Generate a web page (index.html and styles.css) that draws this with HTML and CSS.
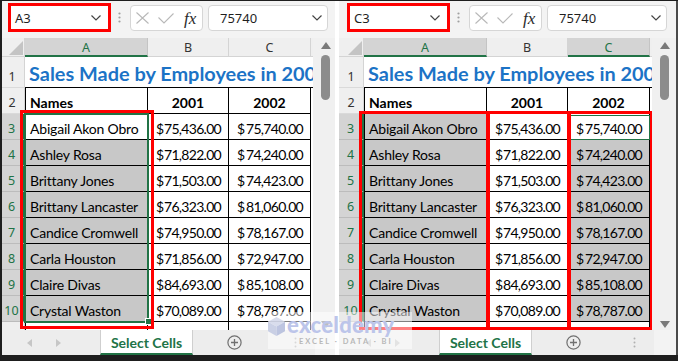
FILE: index.html
```html
<!DOCTYPE html>
<html>
<head>
<meta charset="utf-8">
<link rel="stylesheet" href="styles.css">
</head>
<body>
<div class="screen">
  <div class="panels">
    <div class="clip">
      <section class="panel">
        <div class="toolbar">
          <div class="namebox"><span>A3</span><svg class="chev" width="10" height="6" viewBox="0 0 10 6"><path d="M0.5 0.5L5 5L9.5 0.5" fill="none" stroke="#444" stroke-width="1.2"/></svg></div>
          <div class="vdots"><svg width="3" height="11" viewBox="0 0 3 11"><circle cx="1.5" cy="1.5" r="1.1" fill="#a0a0a0"/><circle cx="1.5" cy="5.5" r="1.1" fill="#a0a0a0"/><circle cx="1.5" cy="9.5" r="1.1" fill="#a0a0a0"/></svg></div>
          <div class="fxbox">
            <svg width="13" height="12" viewBox="0 0 13 12"><path d="M0.5 0.5L12.5 11.5M12.5 0.5L0.5 11.5" stroke="#b8b8b8" stroke-width="1.1" fill="none"/></svg>
            <svg class="chk" width="16" height="11" viewBox="0 0 16 11"><path d="M0.5 4.5L6 10L15.5 0.5" stroke="#b8b8b8" stroke-width="1.1" fill="none"/></svg>
            <span class="fx">fx</span>
          </div>
          <div class="formula"><span>75740</span><svg class="chev" width="10" height="6" viewBox="0 0 10 6"><path d="M0.5 0.5L5 5L9.5 0.5" fill="none" stroke="#444" stroke-width="1.2"/></svg></div>
        </div>
        <div class="sheet">
          <div class="grid">
            <div class="corner"><svg width="25" height="19" viewBox="0 0 25 19"><polygon points="9,17 23,17 23,3" fill="#c4c4c4"/></svg></div>
            <div class="ch sel">A</div><div class="ch">B</div><div class="ch">C</div><div class="ch chd"></div>

            <div class="rh">1</div><div class="title">Sales Made by Employees in 2001 and 2002</div>

            <div class="rh">2</div><div class="c a b">Names</div><div class="c b ctr">2001</div><div class="c b ctr">2002</div><div class="d"></div>

            <div class="rh sel">3</div><div class="c a">Abigail Akon Obro</div><div class="c m"><span>$</span><span>75,436.00</span></div><div class="c m"><span>$</span><span>75,740.00</span></div><div class="d"></div>
            <div class="rh sel">4</div><div class="c a on">Ashley Rosa</div><div class="c m"><span>$</span><span>71,822.00</span></div><div class="c m"><span>$</span><span>74,240.00</span></div><div class="d"></div>
            <div class="rh sel">5</div><div class="c a on">Brittany Jones</div><div class="c m"><span>$</span><span>71,503.00</span></div><div class="c m"><span>$</span><span>74,423.00</span></div><div class="d"></div>
            <div class="rh sel">6</div><div class="c a on">Brittany Lancaster</div><div class="c m"><span>$</span><span>76,323.00</span></div><div class="c m"><span>$</span><span>81,060.00</span></div><div class="d"></div>
            <div class="rh sel">7</div><div class="c a on">Candice Cromwell</div><div class="c m"><span>$</span><span>74,950.00</span></div><div class="c m"><span>$</span><span>78,167.00</span></div><div class="d"></div>
            <div class="rh sel">8</div><div class="c a on">Carla Houston</div><div class="c m"><span>$</span><span>71,856.00</span></div><div class="c m"><span>$</span><span>72,947.00</span></div><div class="d"></div>
            <div class="rh sel">9</div><div class="c a on">Claire Divas</div><div class="c m"><span>$</span><span>84,693.00</span></div><div class="c m"><span>$</span><span>85,108.00</span></div><div class="d"></div>
            <div class="rh sel">10</div><div class="c a on">Crystal Waston</div><div class="c m"><span>$</span><span>70,089.00</span></div><div class="c m"><span>$</span><span>78,787.00</span></div><div class="d"></div>
            <div class="rh last"></div><div class="c a last"></div><div class="c last"></div><div class="c last"></div><div class="d"></div>

            <div class="selbox"></div>
            <div class="handle"></div>
            <div class="mark mark-l"></div>
          </div>
          <div class="scroll">
            <svg class="up" width="10" height="7" viewBox="0 0 10 7"><polygon points="0,7 10,7 5,0" fill="#7a7a7a"/></svg>
            <div class="thumb"></div>
            <div class="spacer"></div>
            <svg class="down" width="10" height="7" viewBox="0 0 10 7"><polygon points="0,0 10,0 5,7" fill="#7a7a7a"/></svg>
          </div>
        </div>
        <div class="tabbar">
          <div class="nav">
            <svg width="5" height="8" viewBox="0 0 5 8"><polygon points="5,0 5,8 0,4" fill="#c6c6c6"/></svg>
            <svg width="5" height="8" viewBox="0 0 5 8"><polygon points="0,0 0,8 5,4" fill="#c6c6c6"/></svg>
          </div>
          <div class="tab">Select Cells</div>
          <div class="add"><svg width="15" height="15" viewBox="0 0 15 15"><circle cx="7.5" cy="7.5" r="6.6" fill="none" stroke="#707070" stroke-width="1.2"/><path d="M7.5 4V11M4 7.5H11" stroke="#707070" stroke-width="1.3"/></svg></div>
          <div class="more"><svg width="3" height="11" viewBox="0 0 3 11"><circle cx="1.5" cy="1.5" r="1" fill="#b0b0b0"/><circle cx="1.5" cy="5.5" r="1" fill="#b0b0b0"/><circle cx="1.5" cy="9.5" r="1" fill="#b0b0b0"/></svg></div>
          <div class="hscroll"></div>
        </div>
      </section>
    </div>
    <div class="gap"></div>
    <section class="panel">
      <div class="toolbar">
        <div class="namebox"><span>C3</span><svg class="chev" width="10" height="6" viewBox="0 0 10 6"><path d="M0.5 0.5L5 5L9.5 0.5" fill="none" stroke="#444" stroke-width="1.2"/></svg></div>
        <div class="vdots"><svg width="3" height="11" viewBox="0 0 3 11"><circle cx="1.5" cy="1.5" r="1.1" fill="#a0a0a0"/><circle cx="1.5" cy="5.5" r="1.1" fill="#a0a0a0"/><circle cx="1.5" cy="9.5" r="1.1" fill="#a0a0a0"/></svg></div>
        <div class="fxbox">
          <svg width="13" height="12" viewBox="0 0 13 12"><path d="M0.5 0.5L12.5 11.5M12.5 0.5L0.5 11.5" stroke="#b8b8b8" stroke-width="1.1" fill="none"/></svg>
          <svg class="chk" width="16" height="11" viewBox="0 0 16 11"><path d="M0.5 4.5L6 10L15.5 0.5" stroke="#b8b8b8" stroke-width="1.1" fill="none"/></svg>
          <span class="fx">fx</span>
        </div>
        <div class="formula"><span>75740</span><svg class="chev" width="10" height="6" viewBox="0 0 10 6"><path d="M0.5 0.5L5 5L9.5 0.5" fill="none" stroke="#444" stroke-width="1.2"/></svg></div>
      </div>
      <div class="sheet">
        <div class="grid">
          <div class="corner"><svg width="25" height="19" viewBox="0 0 25 19"><polygon points="9,17 23,17 23,3" fill="#c4c4c4"/></svg></div>
          <div class="ch sel">A</div><div class="ch">B</div><div class="ch sel">C</div><div class="ch chd"></div>

          <div class="rh">1</div><div class="title">Sales Made by Employees in 2001 and 2002</div>

          <div class="rh">2</div><div class="c a b">Names</div><div class="c b ctr">2001</div><div class="c b ctr">2002</div><div class="d"></div>

          <div class="rh sel">3</div><div class="c a on">Abigail Akon Obro</div><div class="c m"><span>$</span><span>75,436.00</span></div><div class="c m"><span>$</span><span>75,740.00</span></div><div class="d"></div>
          <div class="rh sel">4</div><div class="c a on">Ashley Rosa</div><div class="c m"><span>$</span><span>71,822.00</span></div><div class="c m on"><span>$</span><span>74,240.00</span></div><div class="d"></div>
          <div class="rh sel">5</div><div class="c a on">Brittany Jones</div><div class="c m"><span>$</span><span>71,503.00</span></div><div class="c m on"><span>$</span><span>74,423.00</span></div><div class="d"></div>
          <div class="rh sel">6</div><div class="c a on">Brittany Lancaster</div><div class="c m"><span>$</span><span>76,323.00</span></div><div class="c m on"><span>$</span><span>81,060.00</span></div><div class="d"></div>
          <div class="rh sel">7</div><div class="c a on">Candice Cromwell</div><div class="c m"><span>$</span><span>74,950.00</span></div><div class="c m on"><span>$</span><span>78,167.00</span></div><div class="d"></div>
          <div class="rh sel">8</div><div class="c a on">Carla Houston</div><div class="c m"><span>$</span><span>71,856.00</span></div><div class="c m on"><span>$</span><span>72,947.00</span></div><div class="d"></div>
          <div class="rh sel">9</div><div class="c a on">Claire Divas</div><div class="c m"><span>$</span><span>84,693.00</span></div><div class="c m on"><span>$</span><span>85,108.00</span></div><div class="d"></div>
          <div class="rh sel">10</div><div class="c a on">Crystal Waston</div><div class="c m"><span>$</span><span>70,089.00</span></div><div class="c m on"><span>$</span><span>78,787.00</span></div><div class="d"></div>
          <div class="rh last"></div><div class="c a last"></div><div class="c last"></div><div class="c last"></div><div class="d"></div>

          <div class="active"></div>
          <div class="mark mark-ra"></div>
          <div class="mark mark-rb"></div>
          <div class="mark mark-rc"></div>
        </div>
        <div class="scroll">
          <svg class="up" width="10" height="7" viewBox="0 0 10 7"><polygon points="0,7 10,7 5,0" fill="#7a7a7a"/></svg>
          <div class="thumb"></div>
          <div class="spacer"></div>
          <svg class="down" width="10" height="7" viewBox="0 0 10 7"><polygon points="0,0 10,0 5,7" fill="#7a7a7a"/></svg>
        </div>
      </div>
      <div class="tabbar">
        <div class="nav">
          <svg width="5" height="8" viewBox="0 0 5 8"><polygon points="5,0 5,8 0,4" fill="#c6c6c6"/></svg>
          <svg width="5" height="8" viewBox="0 0 5 8"><polygon points="0,0 0,8 5,4" fill="#c6c6c6"/></svg>
        </div>
        <div class="tab">Select Cells</div>
        <div class="add"><svg width="15" height="15" viewBox="0 0 15 15"><circle cx="7.5" cy="7.5" r="6.6" fill="none" stroke="#707070" stroke-width="1.2"/><path d="M7.5 4V11M4 7.5H11" stroke="#707070" stroke-width="1.3"/></svg></div>
        <div class="more"><svg width="3" height="11" viewBox="0 0 3 11"><circle cx="1.5" cy="1.5" r="1" fill="#b0b0b0"/><circle cx="1.5" cy="5.5" r="1" fill="#b0b0b0"/><circle cx="1.5" cy="9.5" r="1" fill="#b0b0b0"/></svg></div>
        <div class="hscroll"></div>
      </div>
    </section>
    <div class="edge"></div>
  </div>

  <div class="watermark">
    <svg class="cube" width="17" height="19" viewBox="0 0 17 19"><polygon points="8.5,0 17,4.75 8.5,9.5 0,4.75" fill="#d3d8ea"/><polygon points="0,4.75 8.5,9.5 8.5,19 0,14.25" fill="#c2c9e2"/><polygon points="17,4.75 8.5,9.5 8.5,19 17,14.25" fill="#b3bcdc"/></svg>
    <div class="wm-text">
      <div class="wm-name">exceldemy</div>
      <div class="wm-sub">EXCEL · DATA · BI</div>
    </div>
  </div>
</div>
</body>
</html>
```

FILE: styles.css
```css
* { box-sizing: border-box; }
html, body { margin: 0; padding: 0; }
body { width: 678px; height: 361px; overflow: hidden; background: #1e1e1e; }

.screen { position: relative; width: 678px; height: 361px; background: #1e1e1e; padding-top: 1px; }
.panels { display: flex; height: 354px; }
.clip { width: 335px; height: 354px; flex: none; border-left: 2px solid #1e1e1e; overflow: hidden; }
.clip .panel { margin-left: -2px; }
.gap { width: 4px; flex: none; background: #ffffff; }
.edge { width: 2px; flex: none; background: #4a4a4a; }

.panel { width: 337px; height: 354px; flex: none; background: #f3f3f3; display: flex; flex-direction: column; }

/* toolbar */
.toolbar { height: 37px; flex: none; display: flex; align-items: flex-start; padding: 2px 0 0 8px; font-family: "Noto Sans", "Open Sans", sans-serif; font-size: 13px; color: #1f1f1f; }
.namebox { width: 103px; height: 29px; flex: none; border: 3px solid #ff0000; background: #fff; display: flex; align-items: center; justify-content: space-between; padding: 0 7px 0 4px; }
.vdots { width: 8px; height: 29px; flex: none; margin: 0 0 0 4px; display: flex; align-items: center; justify-content: center; }
.fxbox { width: 73px; height: 26px; flex: none; margin: 2px 0 0 7px; border: 1px solid #d6d6d6; border-radius: 4px; background: #fff; display: flex; align-items: center; padding: 0 0 0 5px; }
.fxbox .chk { margin-left: 9px; }
.fx { margin-left: 10px; font-family: "Liberation Serif", serif; font-style: italic; font-size: 17px; color: #2a2a2a; line-height: 1; }
.formula { width: 120px; height: 26px; flex: none; margin: 2px 0 0 5px; border: 1px solid #d6d6d6; border-radius: 4px; background: #fff; display: flex; align-items: center; justify-content: space-between; padding: 0 5px 0 11px; }

/* sheet */
.sheet { height: 292px; flex: none; display: flex; }
.grid { position: relative; width: 313px; flex: none; display: grid; grid-template-columns: 25px 123px 81px 82px 2px; grid-template-rows: 19px 31px repeat(9, 26px) 8px; background: #fff; overflow: hidden; }

.corner { background: #efefef; border-right: 1px solid #d4d4d4; border-bottom: 1px solid #d4d4d4; }
.corner svg { display: block; }
.ch { background: #efefef; border-right: 1px solid #d4d4d4; border-bottom: 1px solid #d4d4d4; display: flex; align-items: center; justify-content: center; font-family: "Noto Sans", "Open Sans", sans-serif; font-size: 12.5px; color: #333; padding-top: 1px; }
.ch.sel { background: #d4d4d4; color: #217346; border-bottom: 2px solid #217346; border-right-color: #c4c4c4; }
.ch.chd { border-right: none; }

.rh { background: #efefef; border-right: 1px solid #d4d4d4; border-bottom: 1px solid #dadada; display: flex; align-items: flex-end; justify-content: center; padding-bottom: 2px; font-family: "Noto Sans", "Open Sans", sans-serif; font-size: 12.5px; color: #333; }
.rh.sel { background: #d4d4d4; color: #217346; border-bottom-color: #bcbcbc; border-right: 2px solid #217346; }
.rh.last { border-bottom: none; }

.title { grid-column: 2 / 6; border-bottom: 1px solid #000; display: flex; align-items: flex-end; padding: 0 0 2px 4px; white-space: nowrap; overflow: hidden; font-family: "Lato", sans-serif; font-weight: 700; font-size: 19.9px; color: #1c73c6; }

.c { border-right: 1px solid #000; border-bottom: 1px solid #000; display: flex; align-items: flex-end; padding: 0 4px 2px 4px; white-space: nowrap; overflow: hidden; font-family: "Lato", sans-serif; font-size: 14px; letter-spacing: -0.2px; color: #000; }
.c.a { border-left: 1px solid #000; }
.c.b { font-weight: 700; letter-spacing: 0; }
.c.ctr { justify-content: center; }
.c.m { justify-content: space-between; padding: 0 7px 2px 8px; letter-spacing: -0.7px; }
.c.on { background: #c8c8c8; }
.c.last { border-bottom: none; }
.d { background: #fff; }

/* overlays on the grid */
.mark { position: absolute; border: 3px solid #ff0000; }
.mark-l { left: 20px; top: 72px; width: 134px; height: 219px; }
.mark-ra { left: 20px; top: 73px; width: 131px; height: 219px; }
.mark-rb { left: 147px; top: 73px; width: 85px; height: 219px; }
.mark-rc { left: 228px; top: 73px; width: 86px; height: 219px; }
.selbox { position: absolute; left: 24px; top: 75px; width: 125px; height: 210px; border: 2px solid #217346; }
.handle { position: absolute; left: 145px; top: 280px; width: 7px; height: 7px; background: #217346; border: 1px solid #fff; }
.active { position: absolute; left: 231px; top: 77px; width: 80px; height: 25px; border: 1px solid #217346; }

/* scrollbar */
.scroll { width: 24px; flex: none; background: #f0f0f0; display: flex; flex-direction: column; align-items: flex-start; padding: 4px 0 2px 8px; }
.scroll svg { display: block; }
.thumb { width: 9px; height: 45px; margin-top: 6px; border-radius: 5px; background: #8c8c8c; }
.spacer { flex: 1; }

/* sheet tabs */
.tabbar { height: 25px; flex: none; display: flex; background: #ededed; }
.nav { width: 100px; flex: none; display: flex; align-items: center; gap: 24px; padding-left: 27px; }
.nav svg { display: block; }
.tab { width: 93px; flex: none; background: #fff; border-left: 1px solid #cfcfcf; border-right: 1px solid #cfcfcf; border-bottom: 2px solid #217346; display: flex; align-items: center; justify-content: center; font-family: "Lato", sans-serif; font-weight: 700; font-size: 14px; color: #217346; padding-top: 1px; }
.add { width: 82px; flex: none; display: flex; align-items: center; justify-content: center; }
.add svg { display: block; }
.more { width: 40px; flex: none; display: flex; align-items: center; justify-content: center; }
.more svg { display: block; }
.hscroll { flex: 1; background: #f3f3f3; }

/* watermark */
.watermark { position: absolute; left: 268px; top: 312px; width: 144px; height: 37px; display: flex; align-items: flex-start; gap: 2px; padding-top: 4px; background: rgba(255, 255, 255, 0.5); }
.cube { display: block; flex: none; margin-top: 1px; opacity: 0.85; }
.wm-text { display: flex; flex-direction: column; align-items: center; }
.wm-name { font-family: "Lato", sans-serif; font-weight: 900; font-size: 22px; line-height: 18px; color: #bcc5ea; letter-spacing: 0.3px; }
.wm-sub { font-family: "Lato", sans-serif; font-weight: 700; font-size: 7.5px; line-height: 10px; color: #b8b8b8; letter-spacing: 2px; margin-top: 3px; margin-left: 10px; }
```
